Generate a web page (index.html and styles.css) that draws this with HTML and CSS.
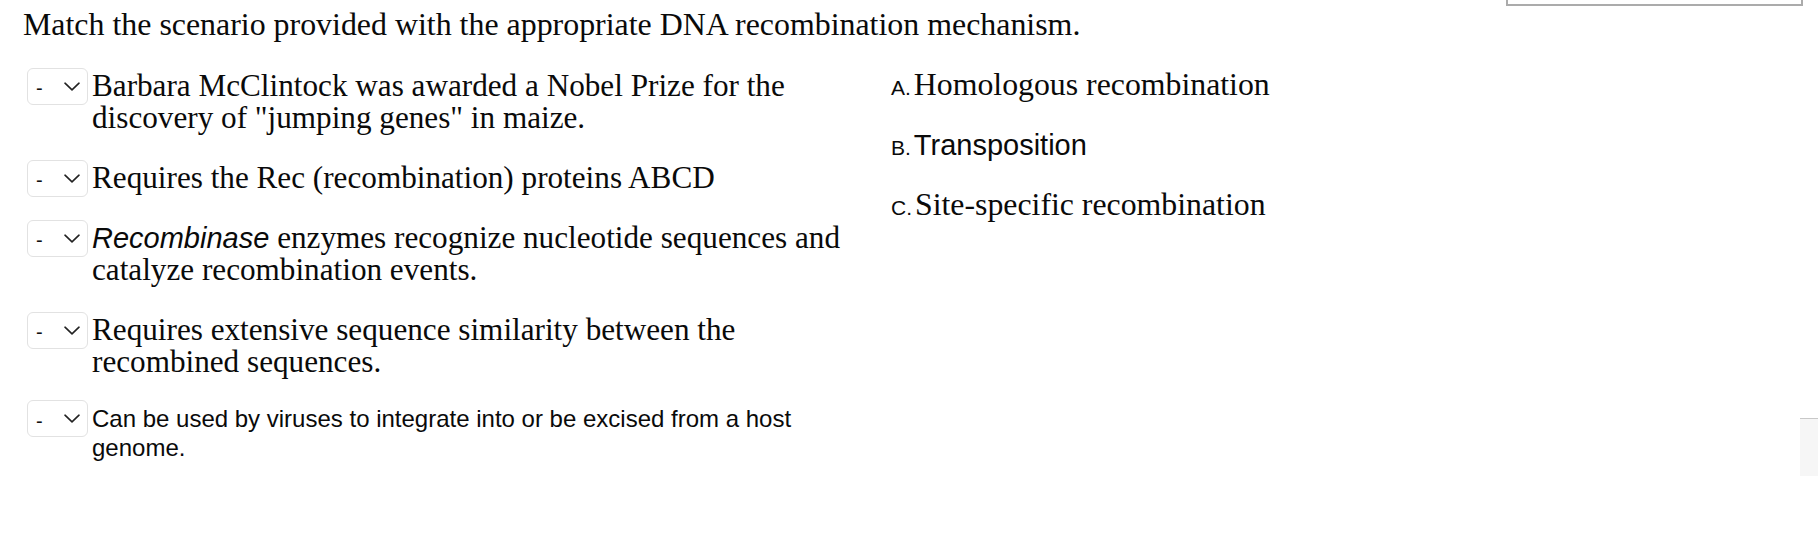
FILE: index.html
```html
<!DOCTYPE html>
<html lang="en">
<head>
<meta charset="utf-8">
<title>DNA recombination matching</title>
<link rel="stylesheet" href="styles.css">
</head>
<body>
<div class="page">
  <p class="prompt">Match the scenario provided with the appropriate DNA recombination mechanism.</p>
  <div class="quiz">
    <div class="items">
      <div class="item">
        <div class="select"><span class="dash">-</span><svg class="chev" width="16" height="9" viewBox="0 0 16 9"><path d="M1 1.2 L8 7.8 L15 1.2" fill="none" stroke="#222" stroke-width="1.6" stroke-linecap="round" stroke-linejoin="round"/></svg></div>
        <div class="stem">Barbara McClintock was awarded a Nobel Prize for the discovery of "jumping genes" in maize.</div>
      </div>
      <div class="item">
        <div class="select"><span class="dash">-</span><svg class="chev" width="16" height="9" viewBox="0 0 16 9"><path d="M1 1.2 L8 7.8 L15 1.2" fill="none" stroke="#222" stroke-width="1.6" stroke-linecap="round" stroke-linejoin="round"/></svg></div>
        <div class="stem">Requires the Rec (recombination) proteins ABCD</div>
      </div>
      <div class="item">
        <div class="select"><span class="dash">-</span><svg class="chev" width="16" height="9" viewBox="0 0 16 9"><path d="M1 1.2 L8 7.8 L15 1.2" fill="none" stroke="#222" stroke-width="1.6" stroke-linecap="round" stroke-linejoin="round"/></svg></div>
        <div class="stem"><em class="sans-em">Recombinase</em> enzymes recognize nucleotide sequences and catalyze recombination events.</div>
      </div>
      <div class="item">
        <div class="select"><span class="dash">-</span><svg class="chev" width="16" height="9" viewBox="0 0 16 9"><path d="M1 1.2 L8 7.8 L15 1.2" fill="none" stroke="#222" stroke-width="1.6" stroke-linecap="round" stroke-linejoin="round"/></svg></div>
        <div class="stem">Requires extensive sequence similarity between the recombined sequences.</div>
      </div>
      <div class="item item-sans">
        <div class="select"><span class="dash">-</span><svg class="chev" width="16" height="9" viewBox="0 0 16 9"><path d="M1 1.2 L8 7.8 L15 1.2" fill="none" stroke="#222" stroke-width="1.6" stroke-linecap="round" stroke-linejoin="round"/></svg></div>
        <div class="stem stem-sans">Can be used by viruses to integrate into or be excised from a host genome.</div>
      </div>
    </div>
    <ul class="answers">
      <li class="answer"><span class="letter">A.</span>Homologous recombination</li>
      <li class="answer answer-sans"><span class="letter">B.</span>Transposition</li>
      <li class="answer"><span class="letter">C.</span>Site-specific recombination</li>
    </ul>
  </div>
</div>
<div class="top-box"></div>
<div class="side-tab"></div>
</body>
</html>
```

FILE: styles.css
```css
html, body {
  margin: 0;
  padding: 0;
  background: #ffffff;
}

body {
  font-family: "Liberation Serif", "Times New Roman", serif;
  font-size: 31.2px;
  line-height: 32px;
  color: #0a0a0a;
  width: 1818px;
  height: 552px;
  overflow: hidden;
  position: relative;
}

.page {
  padding: 10px 0 0 23px;
}

.prompt {
  margin: 0;
  font-size: 31.9px;
  line-height: 30px;
  white-space: nowrap;
}

.quiz {
  display: flex;
  align-items: flex-start;
  margin-top: 30px;
}

.items {
  width: 847px;
  padding-left: 4px;
  display: flex;
  flex-direction: column;
  gap: 28px;
}

.item {
  display: flex;
  align-items: flex-start;
  gap: 4px;
}

.item-sans {
  margin-top: -2px;
}

.select {
  box-sizing: border-box;
  flex: 0 0 61px;
  width: 61px;
  height: 37px;
  margin-top: -2.5px;
  margin-bottom: -2.5px;
  border: 1px solid #e2e2e2;
  border-radius: 6px;
  display: flex;
  align-items: center;
  padding: 0 7px 0 8px;
  background: #ffffff;
}

.item-sans .select {
  margin-top: -4px;
  margin-bottom: -4px;
}

.dash {
  font-family: "Liberation Sans", Arial, sans-serif;
  font-size: 20px;
  line-height: 20px;
  padding-top: 4px;
  color: #111111;
}

.chev {
  margin-left: auto;
  display: block;
}

.stem {
  width: 780px;
}

.sans-em {
  font-family: "Liberation Sans", Arial, sans-serif;
  font-size: 29px;
  font-style: italic;
}

.stem-sans {
  font-family: "Liberation Sans", Arial, sans-serif;
  font-size: 24px;
  line-height: 29px;
}

.answers {
  list-style: none;
  margin: 0;
  padding: 0 0 0 17px;
  display: flex;
  flex-direction: column;
  gap: 27px;
  font-size: 31.8px;
}

.answer {
  line-height: 30px;
  white-space: nowrap;
}

.answer-sans {
  font-family: "Liberation Sans", Arial, sans-serif;
  font-size: 29px;
}

.letter {
  font-family: "Liberation Sans", Arial, sans-serif;
  font-size: 21px;
  margin-right: 3px;
}

.top-box {
  position: absolute;
  top: -50px;
  left: 1506px;
  width: 297px;
  height: 56px;
  box-sizing: border-box;
  border: 2px solid #ababab;
  background: #ffffff;
}

.side-tab {
  position: absolute;
  right: 0;
  top: 418px;
  width: 18px;
  height: 58px;
  box-sizing: border-box;
  border-top: 1px solid #c8c8c8;
  background: #f6f6f6;
}
```
